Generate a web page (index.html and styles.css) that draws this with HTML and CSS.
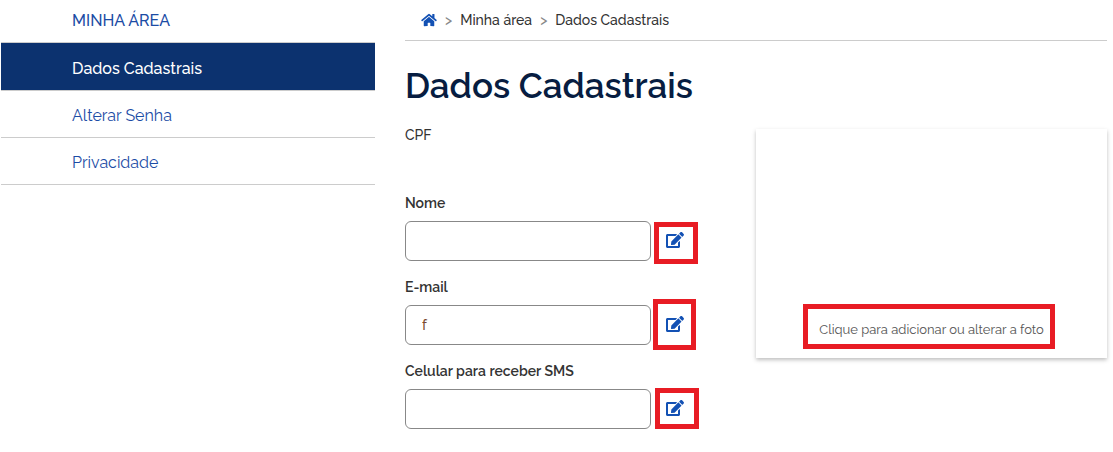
FILE: index.html
```html
<!DOCTYPE html>
<html lang="pt-BR">
<head>
<meta charset="utf-8">
<meta name="viewport" content="width=device-width, initial-scale=1">
<title>Dados Cadastrais</title>
<link rel="stylesheet" href="styles.css">
</head>
<body>
<svg class="sprite" aria-hidden="true">
  <symbol id="edit" viewBox="0 0 576 512"><path d="M402.6 83.2l90.2 90.2c3.8 3.8 3.8 10 0 13.8L274.4 405.6l-92.8 10.3c-12.4 1.4-22.9-9.1-21.5-21.5l10.3-92.8L388.8 83.2c3.8-3.8 10-3.8 13.8 0zm162-22.9l-48.8-48.8c-15.200-15.200-39.900-15.200-55.200 0l-35.400 35.400c-3.800 3.800-3.800 10 0 13.800l90.200 90.200c3.800 3.800 10 3.800 13.800 0l35.400-35.400c15.200-15.300 15.200-40 0-55.200zM384 346.200V448H64V128h229.800c3.200 0 6.200-1.300 8.500-3.500l40-40c7.600-7.600 2.200-20.500-8.500-20.500H48C21.500 64 0 85.500 0 112v352c0 26.500 21.500 48 48 48h352c26.500 0 48-21.500 48-48V306.200c0-10.700-12.900-16-20.500-8.500l-40 40c-2.200 2.300-3.500 5.300-3.500 8.500z"/></symbol>
</svg>
<div class="page">
  <nav class="side" aria-label="Minha área">
    <a class="side-link side-title" href="#">MINHA ÁREA</a>
    <a class="side-link side-active" href="#" aria-current="page">Dados Cadastrais</a>
    <a class="side-link" href="#">Alterar Senha</a>
    <a class="side-link" href="#">Privacidade</a>
  </nav>
  <main class="main">
    <nav class="crumbs" aria-label="Trilha">
      <a class="crumb-home" href="#" aria-label="Início"><svg class="home-icon" viewBox="0 0 576 512" aria-hidden="true"><path d="M280.400 148.300L96 300.100V464a16 16 0 0 0 16 16l112.100-.3a16 16 0 0 0 15.900-16V368a16 16 0 0 1 16-16h64a16 16 0 0 1 16 16v95.600a16 16 0 0 0 16 16.100L464 480a16 16 0 0 0 16-16V300L295.700 148.300a12.200 12.200 0 0 0-15.300 0zM571.600 251.500L488 182.600V44.100a12 12 0 0 0-12-12h-56a12 12 0 0 0-12 12v72.600L318.500 43a48 48 0 0 0-61 0L4.300 251.500a12 12 0 0 0-1.600 16.900l25.500 31A12 12 0 0 0 45.200 301l235.200-193.700a12.200 12.200 0 0 1 15.300 0L530.900 301a12 12 0 0 0 16.900-1.600l25.500-31a12 12 0 0 0-1.700-16.900z"/></svg></a>
      <span class="crumb-sep">&gt;</span>
      <a class="crumb" href="#">Minha área</a>
      <span class="crumb-sep">&gt;</span>
      <span class="crumb">Dados Cadastrais</span>
    </nav>
    <h1 class="heading">Dados Cadastrais</h1>
    <div class="content">
      <form class="form">
        <div class="static">CPF</div>
        <label class="label" for="nome">Nome</label>
        <div class="row">
          <input class="input" id="nome" type="text">
          <button class="edit" type="button" aria-label="Editar nome"><svg class="edit-icon" aria-hidden="true"><use href="#edit"/></svg><span class="mark mark-name"></span></button>
        </div>
        <label class="label" for="email">E-mail</label>
        <div class="row">
          <input class="input" id="email" type="text" value="f">
          <button class="edit" type="button" aria-label="Editar e-mail"><svg class="edit-icon" aria-hidden="true"><use href="#edit"/></svg><span class="mark mark-email"></span></button>
        </div>
        <label class="label" for="celular">Celular para receber SMS</label>
        <div class="row">
          <input class="input" id="celular" type="tel">
          <button class="edit" type="button" aria-label="Editar celular"><svg class="edit-icon" aria-hidden="true"><use href="#edit"/></svg><span class="mark mark-phone"></span></button>
        </div>
      </form>
      <button class="photo" type="button"><span class="photo-text">Clique para adicionar ou alterar a foto<span class="mark mark-photo"></span></span></button>
    </div>
  </main>
</div>
</body>
</html>
```
FILE: styles.css
```css
* { box-sizing: border-box; }
body {
  margin: 0;
  background: #fff;
  color: #333;
  font: 500 14px/20px Raleway, Lato, sans-serif;
}
a { color: inherit; text-decoration: none; }
.sprite { display: none; }
.page {
  display: grid;
  grid-template-columns: 374fr 702fr;
  column-gap: 30px;
  align-items: start;
  padding: 0 6px 0 1px;
}
.side { display: flex; flex-direction: column; }
.side-link {
  padding: 13px 16px 9px 71px;
  border-bottom: 1px solid #ccc;
  color: #1c4ca5;
  font-size: 16px;
  font-weight: 400;
  line-height: 24px;
}
.side-title { padding-top: 9px; font-weight: 500; }
.side-active {
  padding-top: 14px;
  background: #0c326f;
  background-clip: padding-box;
  color: #fff;
  font-weight: 500;
}
.crumbs {
  display: flex;
  align-items: center;
  gap: 8px;
  padding: 10px 16px;
  border-bottom: 1px solid #ccc;
}
.crumb-home { display: flex; }
.home-icon { width: 16px; height: 14px; fill: #1351b4; }
.crumb-sep { color: #888; }
.heading {
  margin: 25px 0 19px;
  color: #071d41;
  font-size: 35px;
  font-weight: 600;
  line-height: 40px;
}
.content {
  display: grid;
  grid-template-columns: 1fr 1fr;
  align-items: start;
}
.static { min-height: 68px; }
.label { display: block; margin-bottom: 8px; font-weight: 600; }
.row { display: flex; align-items: center; margin-bottom: 16px; }
.input {
  width: 70%;
  height: 40px;
  padding: 0 16px;
  border: 1px solid #888;
  border-radius: 6px;
  background: #fff;
  color: #7a4a30;
  font: inherit;
}
.edit {
  position: relative;
  display: flex;
  align-items: center;
  justify-content: center;
  width: 48px;
  height: 40px;
  padding: 0 0 2px;
  border: 0;
  background: none;
}
.edit-icon { width: 18px; height: 16px; fill: #1351b4; }
.mark { position: absolute; border: 5px solid #e81c24; pointer-events: none; }
.mark-name { inset: 1px 1px -3px 3px; }
.mark-email { inset: -6px 3px -5px 2px; }
.mark-phone { inset: -1px 0 0 4px; }
.mark-photo { inset: -16px -11px -9px -16px; }
.photo {
  display: flex;
  align-items: flex-end;
  justify-content: center;
  min-height: 229px;
  margin-top: 4px;
  padding: 18px;
  border: 0;
  background: #fff;
  box-shadow: 0 2px 4px rgba(0, 0, 0, .25);
  color: #555;
  font: 13px/20px Raleway, Lato, sans-serif;
}
.photo-text { position: relative; }
```
